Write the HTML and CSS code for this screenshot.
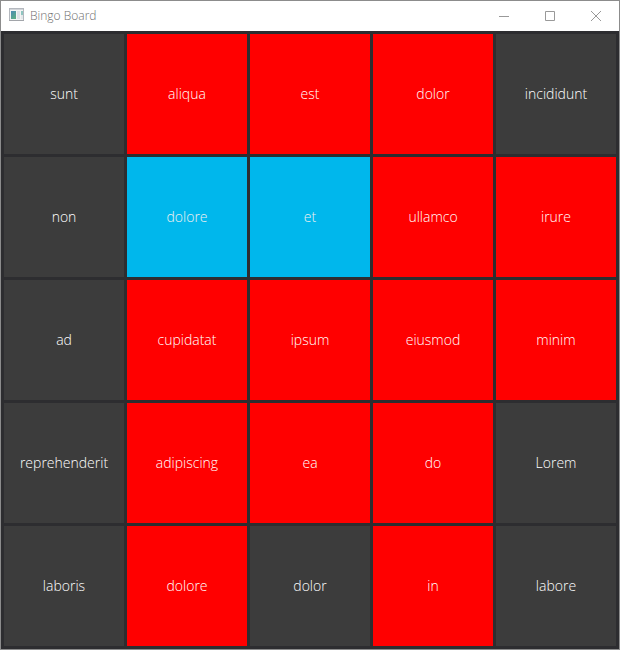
FILE: index.html
```html
<!DOCTYPE html>
<html lang="en">
<head>
<meta charset="utf-8">
<title>Bingo Board</title>
<link rel="stylesheet" href="styles.css">
</head>
<body>
<div class="window">
  <header class="titlebar">
    <svg class="app-icon" width="16" height="16" viewBox="0 0 16 16" aria-hidden="true">
      <defs>
        <linearGradient id="pane" x1="0" y1="0" x2="0.6" y2="1">
          <stop offset="0" stop-color="#4c8ab4"/>
          <stop offset="1" stop-color="#5cac86"/>
        </linearGradient>
      </defs>
      <rect x="0.5" y="0.5" width="14" height="12" fill="#f4f4f4" stroke="#b4b8be"/>
      <path d="M1 1.5h13" stroke="#d2d5d9"/>
      <path d="M0 12.5h15" stroke="#a2a5aa"/>
      <rect x="2" y="3" width="5" height="8" fill="url(#pane)"/>
      <rect x="8" y="3" width="3" height="8" fill="#dfe2e6"/>
      <rect x="12" y="3" width="2" height="4" fill="#8fc5c0"/>
      <rect x="12" y="7" width="2" height="4" fill="#e4e8ea"/>
    </svg>
    <h1 class="title">Bingo Board</h1>
    <div class="controls">
      <button class="control" type="button" aria-label="Minimize"><svg width="10" height="10" viewBox="0 0 10 10"><path d="M0 5.5h10"/></svg></button>
      <button class="control" type="button" aria-label="Maximize"><svg width="10" height="10" viewBox="0 0 10 10"><path d="M.5.5h9v9h-9z"/></svg></button>
      <button class="control" type="button" aria-label="Close"><svg width="10" height="10" viewBox="0 0 10 10"><path d="M0 0l10 10M10 0L0 10"/></svg></button>
    </div>
  </header>
  <main class="board">
    <button class="cell" type="button">sunt</button>
    <button class="cell marked" type="button">aliqua</button>
    <button class="cell marked" type="button">est</button>
    <button class="cell marked" type="button">dolor</button>
    <button class="cell" type="button">incididunt</button>
    <button class="cell" type="button">non</button>
    <button class="cell active" type="button">dolore</button>
    <button class="cell active" type="button">et</button>
    <button class="cell marked" type="button">ullamco</button>
    <button class="cell marked" type="button">irure</button>
    <button class="cell" type="button">ad</button>
    <button class="cell marked" type="button">cupidatat</button>
    <button class="cell marked" type="button">ipsum</button>
    <button class="cell marked" type="button">eiusmod</button>
    <button class="cell marked" type="button">minim</button>
    <button class="cell" type="button">reprehenderit</button>
    <button class="cell marked" type="button">adipiscing</button>
    <button class="cell marked" type="button">ea</button>
    <button class="cell marked" type="button">do</button>
    <button class="cell" type="button">Lorem</button>
    <button class="cell" type="button">laboris</button>
    <button class="cell marked" type="button">dolore</button>
    <button class="cell" type="button">dolor</button>
    <button class="cell marked" type="button">in</button>
    <button class="cell" type="button">labore</button>
  </main>
</div>
</body>
</html>
```
FILE: styles.css
```css
* {
  box-sizing: border-box;
}

body {
  margin: 0;
}

.window {
  display: flex;
  flex-direction: column;
  min-height: 100vh;
  border: 1px solid #8c8c8c;
  background: #2d2d30;
}

.titlebar {
  display: flex;
  align-items: center;
  height: 30px;
  padding-left: 8px;
  background: #fff;
}

.app-icon {
  margin-right: 5px;
}

.title {
  margin: 0;
  color: #707070;
  font: 300 12px/16px "Open Sans", "Noto Sans", sans-serif;
}

.controls {
  display: flex;
  align-self: stretch;
  margin-left: auto;
}

.control {
  display: grid;
  place-items: center;
  width: 46px;
  padding: 0;
  border: 0;
  background: none;
}

.control path {
  fill: none;
  stroke: #999;
}

.board {
  display: grid;
  flex: 1;
  grid-template-columns: repeat(5, minmax(0, 1fr));
  grid-auto-rows: 1fr;
  gap: 3px;
  padding: 3px;
}

.cell {
  padding: 0;
  border: 0;
  background: #3c3c3c;
  color: #fff;
  font: 350 14px/20px "Open Sans", "Noto Sans", sans-serif;
}

.marked {
  background: #f00;
}

.active {
  background: #00b7ec;
  color: #f0f0f0;
}
```
